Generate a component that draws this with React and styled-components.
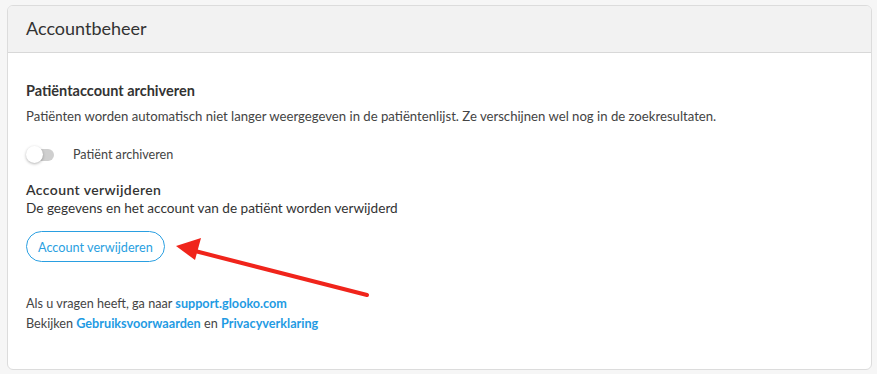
import React, { useState } from 'react';
import styled, { createGlobalStyle } from 'styled-components';

const GlobalStyle = createGlobalStyle`
  html, body {
    margin: 0;
    padding: 0;
    background: #f6f6f6;
    font-family: Lato, "Open Sans", sans-serif;
    color: #333;
  }
`;

const Page = styled.div`
  position: relative;
  padding: 5px 5px 6px 7px;
`;

const Card = styled.section`
  background: #fff;
  border: 1px solid #dcdcdc;
  border-radius: 6px;
  overflow: hidden;
`;

const CardHeader = styled.header`
  height: 47px;
  box-sizing: border-box;
  display: flex;
  align-items: center;
  padding: 0 18px 3px;
  background: #f2f2f2;
  border-bottom: 1px solid #d8d8d8;
  font-size: 18px;
  color: #333;
`;

const CardBody = styled.div`
  padding: 28px 18px 35px;
  display: flex;
  flex-direction: column;
`;

const Title = styled.h3`
  margin: 0 0 5px;
  font-size: 14.5px;
  font-weight: 700;
  line-height: 20px;
  color: #333;
`;

const Text = styled.p`
  margin: 0;
  font-size: ${p => p.$size || '13px'};
  line-height: 20px;
  color: ${p => (p.$muted ? '#444' : '#333')};
`;

const ToggleRow = styled.label`
  display: flex;
  align-items: center;
  gap: 19px;
  margin: 21px 0 19px;
  font-size: 12.6px;
  color: #444;
  cursor: pointer;
`;

const Track = styled.span`
  position: relative;
  width: 27px;
  height: 12px;
  margin-left: 1px;
  border-radius: 6px;
  background: ${p => (p.$on ? '#7cc3ee' : '#cfcfcf')};
`;

const Knob = styled.span`
  position: absolute;
  top: -3px;
  left: ${p => (p.$on ? '10px' : '-1px')};
  width: 17px;
  height: 17px;
  border-radius: 50%;
  background: #fff;
  box-shadow: 0 1px 3px rgba(0, 0, 0, 0.3);
`;

const Subtitle = styled.h4`
  margin: 0;
  font-size: 14px;
  font-weight: 600;
  letter-spacing: 0.4px;
  line-height: 17px;
  color: #333;
`;

const OutlineButton = styled.button`
  align-self: flex-start;
  margin: 13px 0 32px;
  height: 31px;
  padding: 0 11px;
  border: 1px solid #2a9fe1;
  border-radius: 16px;
  background: #fff;
  color: #2a9fe1;
  font-family: inherit;
  font-size: 12.7px;
  cursor: pointer;
`;

const Link = styled.a`
  color: #1f9be3;
  font-weight: 700;
  text-decoration: none;
`;

const Arrow = styled.svg`
  position: absolute;
  left: 0;
  top: 0;
  pointer-events: none;
`;

export default function App() {
  const [archived, setArchived] = useState(false);
  return (
    <Page>
      <GlobalStyle />
      <Card>
        <CardHeader>Accountbeheer</CardHeader>
        <CardBody>
          <Title>Patiëntaccount archiveren</Title>
          <Text $muted $size="13.15px">
            Patiënten worden automatisch niet langer weergegeven in de patiëntenlijst. Ze verschijnen wel nog in de zoekresultaten.
          </Text>
          <ToggleRow onClick={() => setArchived(!archived)}>
            <Track $on={archived}>
              <Knob $on={archived} />
            </Track>
            Patiënt archiveren
          </ToggleRow>
          <Subtitle>Account verwijderen</Subtitle>
          <Text $size="13.6px">De gegevens en het account van de patiënt worden verwijderd</Text>
          <OutlineButton>Account verwijderen</OutlineButton>
          <Text $muted $size="12.65px">
            Als u vragen heeft, ga naar <Link href="#">support.glooko.com</Link>
          </Text>
          <Text $muted $size="12.65px">
            Bekijken <Link href="#">Gebruiksvoorwaarden</Link> en <Link href="#">Privacyverklaring</Link>
          </Text>
        </CardBody>
      </Card>
      <Arrow width="877" height="374" viewBox="0 0 877 374">
        <line x1="367" y1="295" x2="195" y2="251" stroke="#f0241b" strokeWidth="4" strokeLinecap="round" />
        <polygon points="176,246 201,238 195,260" fill="#f0241b" />
      </Arrow>
    </Page>
  );
}
